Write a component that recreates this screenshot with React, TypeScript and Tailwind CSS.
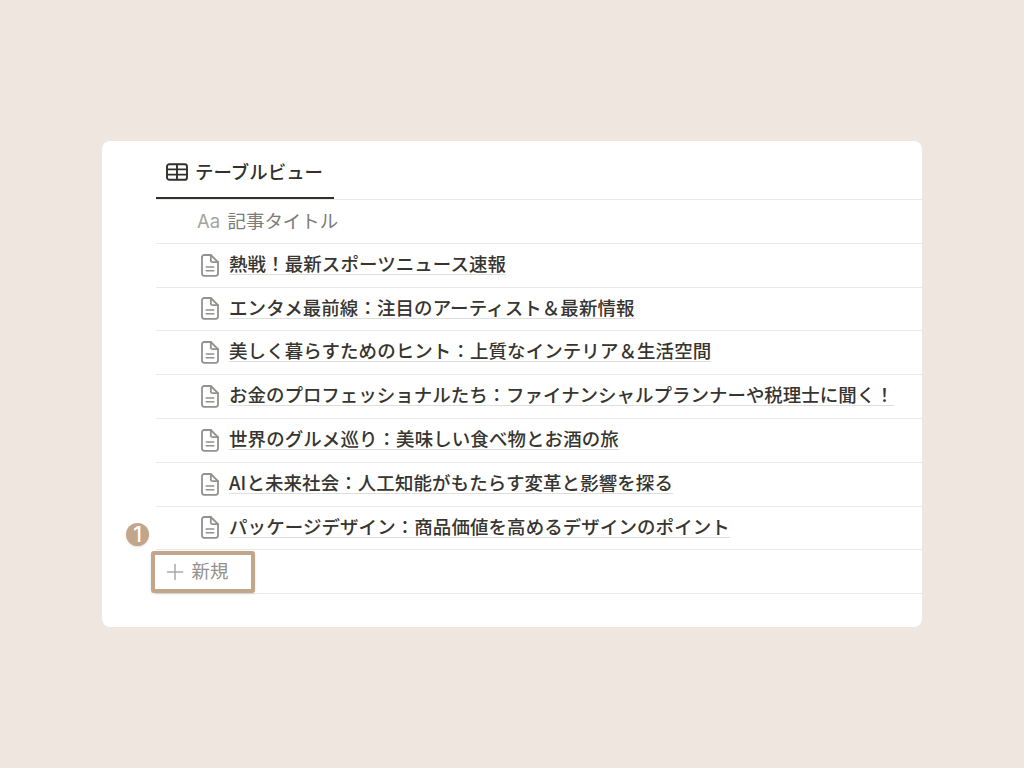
import { Plus } from "lucide-react";

const ARTICLES = [
  "熱戦！最新スポーツニュース速報",
  "エンタメ最前線：注目のアーティスト＆最新情報",
  "美しく暮らすためのヒント：上質なインテリア＆生活空間",
  "お金のプロフェッショナルたち：ファイナンシャルプランナーや税理士に聞く！",
  "世界のグルメ巡り：美味しい食べ物とお酒の旅",
  "AIと未来社会：人工知能がもたらす変革と影響を探る",
  "パッケージデザイン：商品価値を高めるデザインのポイント",
];

function TableIcon() {
  return (
    <svg width="22" height="18" viewBox="0 0 22 18" fill="none" stroke="#32302c" strokeWidth="1.9">
      <rect x="1" y="1.2" width="20" height="15.6" rx="2.4" />
      <path d="M1 6.4h20M1 11.6h20M11 1.2v15.6" />
    </svg>
  );
}

function PageIcon() {
  return (
    <svg width="18" height="23" viewBox="0 0 18 23" fill="none" stroke="#91918e" strokeWidth="1.8" strokeLinejoin="round" strokeLinecap="round">
      <path d="M3.2 1h6.6L17 8.2v11.4a2.2 2.2 0 0 1-2.2 2.2H3.2A2.2 2.2 0 0 1 1 19.6V3.2A2.2 2.2 0 0 1 3.2 1Z" />
      <path d="M9.8 1v5.4a1.8 1.8 0 0 0 1.8 1.8H17" />
      <path d="M5.200 13h7.600M5.200 16.800h7.600" strokeWidth="1.5" />
    </svg>
  );
}

function ArticleRow({ title }: { title: string }) {
  // Long titles are set slightly tighter
  const tracking = title.length > 30 ? "tracking-[0.02px]" : "tracking-[0.11px]";

  return (
    <li className="flex h-[43.8px] items-center border-b border-[#e9e9e7] pl-[45px]">
      <PageIcon />
      <span
        className={`ml-[10px] -mt-[2.8px] h-[22px] border-b border-[#dededc] text-[18.47px] leading-[21px] font-medium whitespace-nowrap text-[#37352f] ${tracking}`}
      >
        {title}
      </span>
    </li>
  );
}

export default function App() {
  return (
    <main className="flex h-screen w-screen bg-[#efe6e0] pt-[141px] pl-[102px] font-['Noto_Sans_CJK_JP',sans-serif]">
      <section className="relative h-[486px] w-[819.5px] rounded-lg bg-white pl-[54px]">
        {/* View tab */}
        <div className="flex h-[59px] border-b border-[#e9e9e7]">
          <div className="flex h-[58px] w-[178px] items-center border-b-2 border-[#32302c] pt-[6px] pl-[10px]">
            <TableIcon />
            <span className="-mt-[2px] ml-[7px] text-[18.47px] leading-none font-medium text-[#32302c]">テーブルビュー</span>
          </div>
        </div>

        {/* Column title */}
        <div className="flex h-[43.8px] items-center border-b border-[#e9e9e7] pl-[41px]">
          <span className="mt-px w-[30.5px] font-['Inter',sans-serif] text-[18.5px] text-[#a5a4a1]">Aa</span>
          <span className="-mt-[2px] text-[18.47px] text-[#7d7c78]">記事タイトル</span>
        </div>

        <ul>
          {ARTICLES.map((title) => (
            <ArticleRow key={title} title={title} />
          ))}
        </ul>

        <div className="flex h-[43.8px] items-center border-b border-[#e9e9e7] pl-[6px]">
          <Plus size={26} strokeWidth={1.4} className="text-[#acaba9]" />
          <span className="-mt-[2px] ml-[3.5px] text-[18.47px] text-[#91918e]">新規</span>
        </div>

        {/* Step marker and highlight */}
        <div className="absolute top-[410px] left-[49px] h-[42px] w-[104px] rounded-[3px] border-4 border-[#c3a58a] shadow-sm" />
        <div className="absolute top-[382px] left-[24px] flex size-[23px] items-center justify-center rounded-full bg-[#c3a58a] font-['Inter',sans-serif] text-[21px] leading-none font-medium text-white shadow-sm">
          1
        </div>
      </section>
    </main>
  );
}
